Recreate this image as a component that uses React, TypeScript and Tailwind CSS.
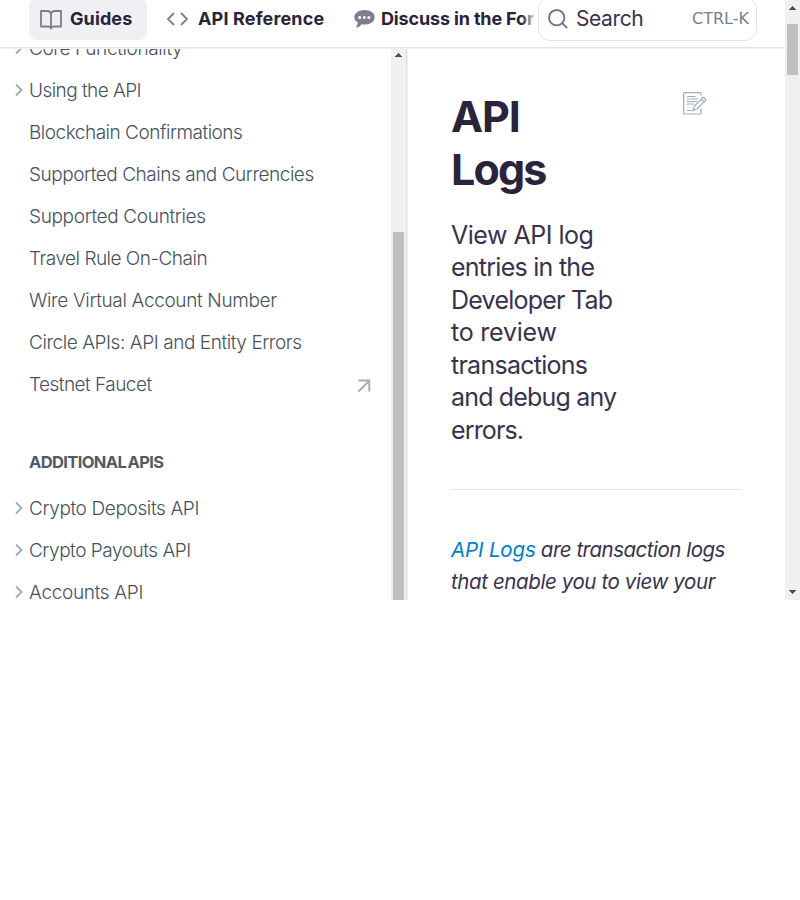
import type { ReactNode } from "react";

function Line({ children, className = "" }: { children: ReactNode; className?: string }) {
  return <span className={`block whitespace-nowrap ${className}`}>{children}</span>;
}

function NavItem({ label, tracking, chevron, external }: { label: string; tracking: string; chevron?: boolean; external?: boolean }) {
  return (
    <a className="flex h-[42px] shrink-0 items-center pr-5 pl-[14px] text-[19px] font-[350] text-[#46515d]">
      <span className="flex w-[15px] shrink-0">
        {chevron && (
          <svg width="10" height="14" viewBox="0 0 10 14" fill="none" stroke="#a2a9b0" strokeWidth="1.8">
            <path d="M2 1.500L7.500 7L2 12.500" />
          </svg>
        )}
      </span>
      <span className={`mt-[2px] grow whitespace-nowrap ${tracking}`}>{label}</span>
      {external && (
        <svg className="mt-[3px]" width="14" height="13" viewBox="0 0 14 13" fill="none" stroke="#a4abb1" strokeWidth="1.9">
          <path d="M1.500 1.500H12.300V12.500M12 2L1.500 12.500" />
        </svg>
      )}
    </a>
  );
}

function ArrowUp() {
  return (
    <svg width="7" height="4" viewBox="0 0 7 4" fill="#505050" shapeRendering="crispEdges">
      <path d="M3 0h1v1h1v1h1v1h1v1H0V3h1V2h1V1h1z" />
    </svg>
  );
}

export default function App() {
  return (
    <div className="h-[900px] w-[800px] bg-white font-['Inter','Liberation_Sans',sans-serif]">
      <div className="flex h-[600px] overflow-hidden">
        <div className="flex w-[785px] flex-col">
          <header className="relative z-10 flex h-12 shrink-0 items-start border-b border-[#e1e1e3] pl-[29px] shadow-[0_1px_0_#f1f1f2]">
            <nav className="relative flex h-10 w-[509px] items-start overflow-hidden text-[18px] font-bold text-[#29233b]">
              <a className="flex h-10 w-[118px] shrink-0 items-center rounded-b-lg rounded-t-[5px] bg-[#f0eff4] pb-[3px] pl-[11px]">
                <svg className="mt-[2px]" width="22" height="20" viewBox="0 0 22 20" fill="none" stroke="#817b8e" strokeWidth="1.8" strokeLinejoin="round" strokeLinecap="round">
                  <path d="M1 1H7Q11 1 11 5V18.500Q11 16.500 8 16.500H1ZM21 1H15Q11 1 11 5V18.500Q11 16.500 14 16.500H21Z" />
                </svg>
                <span className="ml-2 tracking-[0.1px]">Guides</span>
              </a>
              <a className="ml-[19px] flex h-10 shrink-0 items-center pb-[3px]">
                <svg className="mt-px" width="22" height="14" viewBox="0 0 22 14" fill="none" stroke="#817b8e" strokeWidth="1.8">
                  <path d="M8 1L2 7L8 13M15 1L21 7L15 13" />
                </svg>
                <span className="ml-[10px] w-[127px] whitespace-nowrap tracking-[0.15px]">API Reference</span>
              </a>
              <a className="ml-[29px] flex h-10 shrink-0 items-center pb-[3px]">
                <svg className="mt-px" width="21" height="18" viewBox="0 0 21 18">
                  <path d="M10.500 0C4.800 0 .3 3.200 .3 7.200C.3 9.400 1.500 11.200 3.800 12.600C3.600 14.600 2.700 16.300 1.500 17.500C4.300 17.400 6.500 16 7.700 14.300C8.600 14.500 9.500 14.600 10.500 14.600C16.200 14.600 20.700 11.300 20.700 7.200S16.200 0 10.500 0Z" fill="#817b8e" />
                  <g fill="#fff"><circle cx="5.700" cy="7.500" r="1.500" /><circle cx="10.300" cy="7.500" r="1.500" /><circle cx="14.900" cy="7.500" r="1.500" /></g>
                </svg>
                <span className="ml-[6px] whitespace-nowrap tracking-[-0.15px]">Discuss in the For</span>
              </a>
              <span className="absolute top-0 right-0 h-10 w-[17px] bg-linear-to-r from-white/0 via-white/50 to-white" />
            </nav>
            <div className="-mt-[3px] flex h-11 w-[219px] items-center rounded-xl border border-[#e3e3e5] pr-[7px] pl-[9px]">
              <svg width="20" height="20" viewBox="0 0 20 20" fill="none" stroke="#64748b" strokeWidth="1.800">
                <circle cx="8.700" cy="8.700" r="7.700" />
                <path d="M14.200 14.200L19.200 19.200" />
              </svg>
              <span className="ml-2 text-[21px] tracking-[-0.4px] text-[#38324e]">Search</span>
              <span className="ml-auto font-['DejaVu_Sans',sans-serif] text-[16px] text-[#718096]">CTRL-K</span>
            </div>
          </header>

          <div className="flex h-[552px]">
            <aside className="flex w-[408px] shrink-0 border-r border-[#f0f0f0]">
              <div className="flex h-[552px] w-[391px] flex-col overflow-hidden">
                <div className="-mt-[21px] flex flex-col">
                  <NavItem label="Core Functionality" tracking="tracking-[-0.37px]" chevron />
                  <NavItem label="Using the API" tracking="tracking-[-0.55px]" chevron />
                  <NavItem label="Blockchain Confirmations" tracking="tracking-[-0.49px]" />
                  <NavItem label="Supported Chains and Currencies" tracking="tracking-[-0.46px]" />
                  <NavItem label="Supported Countries" tracking="tracking-[-0.34px]" />
                  <NavItem label="Travel Rule On-Chain" tracking="tracking-[-0.51px]" />
                  <NavItem label="Wire Virtual Account Number" tracking="tracking-[-0.35px]" />
                  <NavItem label="Circle APIs: API and Entity Errors" tracking="tracking-[-0.43px]" />
                  <NavItem label="Testnet Faucet" tracking="tracking-[-0.53px]" external />
                  <h3 className="mt-[36px] flex h-[46px] items-center pb-1 pl-[29px] text-[16.5px] font-bold tracking-[-0.62px] [word-spacing:-2px] text-[#4f5a66]">ADDITIONAL APIS</h3>
                  <NavItem label="Crypto Deposits API" tracking="tracking-[-0.37px]" chevron />
                  <NavItem label="Crypto Payouts API" tracking="tracking-[-0.46px]" chevron />
                  <NavItem label="Accounts API" tracking="tracking-[-0.32px]" chevron />
                </div>
              </div>
              <div className="flex w-[15px] flex-col items-center bg-[#f0f0f0] pt-[5px]">
                <ArrowUp />
                <div className="mt-[175px] w-[11px] grow bg-[#c0c0c0]" />
              </div>
              <div className="w-px bg-[#e1e1e1]" />
            </aside>

            <main className="h-[552px] w-[377px] overflow-hidden pt-[42px] pl-[43px]">
              <div className="flex h-[107px] items-start text-[#29233b]">
                <h1 className="w-[231.5px] text-[43px] leading-[53.5px] font-bold">
                  <Line className="tracking-[-1.1px]">API</Line>
                  <Line className="-mt-px tracking-[-1.9px]">Logs</Line>
                </h1>
                <svg className="mt-[2px]" width="24" height="23" viewBox="0 0 24 23" fill="none" stroke="#a0aabd" strokeWidth="1.200">
                  <path d="M18 3.500V1.600Q18 .6 17 .6H1.600Q.6.600.6 1.600V21Q.6 22 1.600 22H17Q18 22 18 21V16" />
                  <path d="M4 4.500H12.500M4 7H15M4 9.500H14M4 12H11M4 18.500H8.500" />
                  <path d="M10 18.500L11.500 14L19.500 5.800Q20.500 5 21.500 6L22.300 6.800Q23.200 7.800 22.300 8.700L14.200 16.700ZM18.500 7.500L21 10" />
                </svg>
              </div>
              <div className="mt-[21.5px] text-[25px] leading-[32.5px] text-[#38324e]">
                <Line className="tracking-[-0.5px]">View API log</Line>
                <Line className="tracking-[-0.74px]">entries in the</Line>
                <Line className="tracking-[-0.77px]">Developer Tab</Line>
                <Line className="tracking-[-0.22px]">to review</Line>
                <Line className="tracking-[-0.74px]">transactions</Line>
                <Line className="tracking-[-0.83px]">and debug any</Line>
                <Line className="tracking-[-0.86px]">errors.</Line>
              </div>
              <hr className="mt-[42.5px] w-[290px] border-[#e1e1e3]" />
              <p className="mt-[44px] text-[20.5px] leading-8 text-[#38324e] italic">
                <Line className="tracking-[-0.5px]"><a className="tracking-[-0.15px] text-[#007fcd]">API Logs</a> are transaction logs</Line>
                <Line className="tracking-[-0.4px]">that enable you to view your</Line>
              </p>
            </main>
          </div>
        </div>
        <div className="flex w-[15px] flex-col items-center bg-[#f0f0f0] py-[6px]">
          <ArrowUp />
          <div className="mt-[14px] h-[51px] w-[11px] bg-[#c0c0c0]" />
          <div className="mt-auto rotate-180"><ArrowUp /></div>
        </div>
      </div>
    </div>
  );
}
